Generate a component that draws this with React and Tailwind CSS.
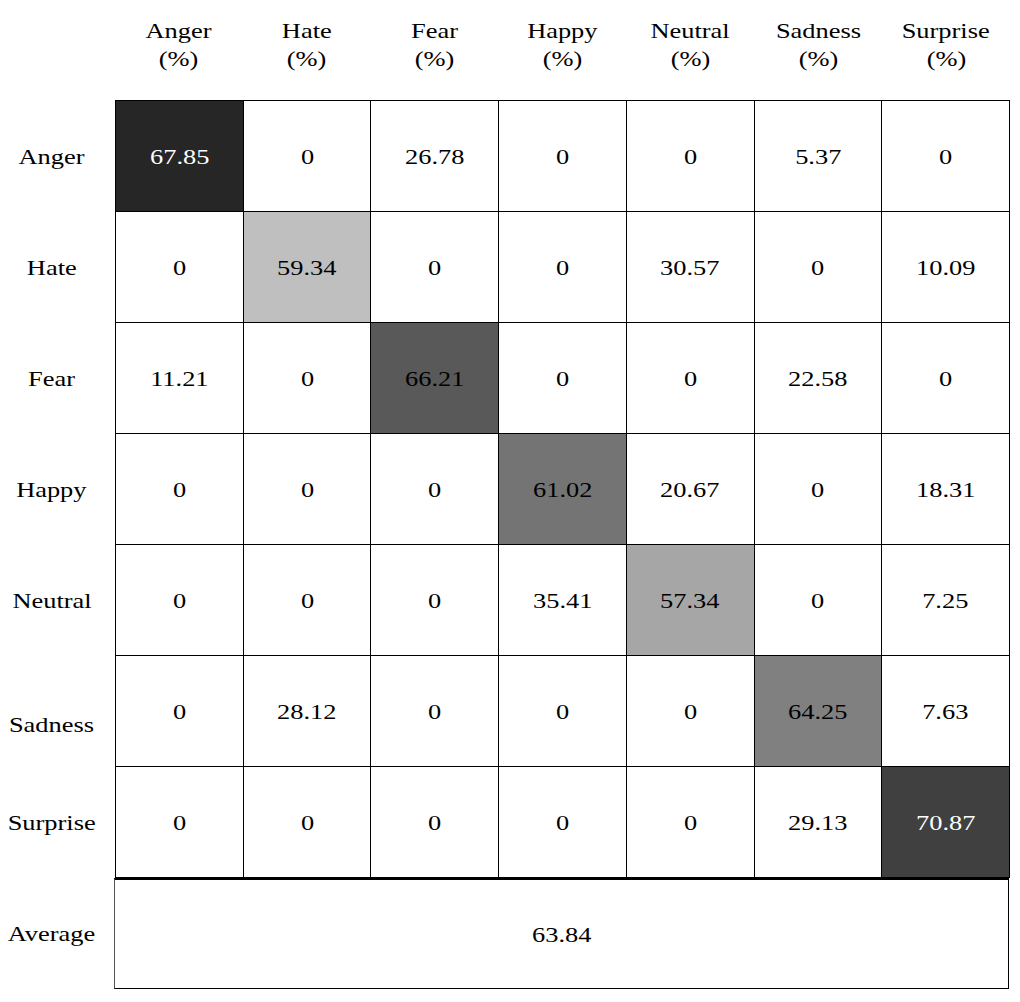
import React from 'react';

const labels = ['Anger', 'Hate', 'Fear', 'Happy', 'Neutral', 'Sadness', 'Surprise'];

const rows = [
    ['67.85', '0', '26.78', '0', '0', '5.37', '0'],
    ['0', '59.34', '0', '0', '30.57', '0', '10.09'],
    ['11.21', '0', '66.21', '0', '0', '22.58', '0'],
    ['0', '0', '0', '61.02', '20.67', '0', '18.31'],
    ['0', '0', '0', '35.41', '57.34', '0', '7.25'],
    ['0', '28.12', '0', '0', '0', '64.25', '7.63'],
    ['0', '0', '0', '0', '0', '29.13', '70.87'],
];

// diagonal shading, one per row
const diag = [
    'bg-[#262626] text-white',
    'bg-[#bfbfbf] text-black',
    'bg-[#595959] text-black',
    'bg-[#747474] text-black',
    'bg-[#a6a6a6] text-black',
    'bg-[#808080] text-black',
    'bg-[#404040] text-white',
];

const Txt = ({ children }) => (
    <span className="inline-block scale-x-120">{children}</span>
);

const App = () => {
    return (
        <main
            className="w-[1020px] h-[1002px] bg-white text-black text-[22px]"
            style={{ fontFamily: '"Liberation Serif", "Times New Roman", serif' }}
        >
            <div className="flex h-[100px]">
                <div className="w-[115px]"></div>
                <div className="w-[895px] grid grid-cols-7 pt-[17px] leading-[28px]">
                    {labels.map(l => (
                        <div key={l} className="flex flex-col items-center">
                            <Txt>{l}</Txt>
                            <Txt>(%)</Txt>
                        </div>
                    ))}
                </div>
            </div>
            {rows.map((row, i) => (
                <div key={labels[i]} className="flex">
                    <div className={`w-[103px] flex items-center justify-center ${labels[i] === 'Sadness' ? 'pt-[26px]' : ''}`}>
                        <Txt>{labels[i]}</Txt>
                    </div>
                    <div className="w-[12px]"></div>
                    <div className={`w-[895px] grid grid-cols-7 border-l border-black ${i === 0 ? 'border-t' : ''}`}>
                        {row.map((v, j) => (
                            <div
                                key={j}
                                className={`h-[111px] flex items-center justify-center border-r border-b border-black ${i === j ? diag[i] : 'bg-white'}`}
                            >
                                <Txt>{v}</Txt>
                            </div>
                        ))}
                    </div>
                </div>
            ))}
            <div className="flex">
                <div className="w-[103px] flex items-center justify-center">
                    <Txt>Average</Txt>
                </div>
                <div className="w-[11px]"></div>
                <div className="w-[895px] h-[111px] flex items-center justify-center border border-black border-t-2 border-l-[#555555]">
                    <Txt>63.84</Txt>
                </div>
            </div>
        </main>
    );
};

export default App;
